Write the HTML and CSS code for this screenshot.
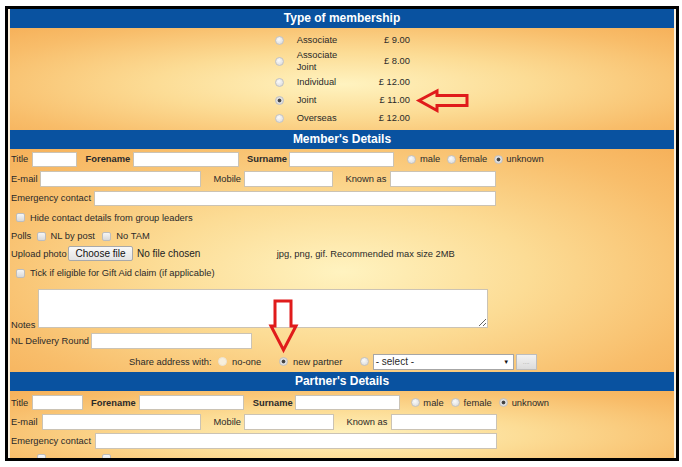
FILE: index.html
```html
<!DOCTYPE html>
<html lang="en">
<head>
    <meta charset="UTF-8">
    <meta name="viewport" content="width=device-width, initial-scale=1.0">
    <title>Membership form</title>
    <link rel="stylesheet" href="styles.css">
</head>
<body>

    <div class="frame">

      <!-- Type of membership -->
      <div class="section-head first">Type of membership</div>
      <div class="section-body plans-body">
        <table class="plans">
          <tr><td class="pick"><input type="radio" name="plan"></td><td class="plan-name">Associate</td><td class="plan-price">£ 9.00</td></tr>
          <tr class="tall"><td class="pick"><input type="radio" name="plan"></td><td class="plan-name">Associate Joint</td><td class="plan-price">£ 8.00</td></tr>
          <tr><td class="pick"><input type="radio" name="plan"></td><td class="plan-name">Individual</td><td class="plan-price">£ 12.00</td></tr>
          <tr><td class="pick"><input type="radio" name="plan" checked></td><td class="plan-name">Joint</td><td class="plan-price">£ 11.00</td></tr>
          <tr><td class="pick"><input type="radio" name="plan"></td><td class="plan-name">Overseas</td><td class="plan-price">£ 12.00</td></tr>
        </table>
      </div>

      <!-- Member's details -->
      <div class="section-head">Member's Details</div>
      <div class="section-body details member">
        <div class="row">
          <span class="l-title">Title</span><input class="i-title" type="text">
          <span class="l-fore">Forename</span><input class="i-fore" type="text">
          <span class="l-sur">Surname</span><input class="i-sur" type="text">
          <span class="gender">
            <input type="radio" name="g1"><span>male</span>
            <input type="radio" name="g1"><span>female</span>
            <input type="radio" name="g1" checked><span>unknown</span>
          </span>
        </div>
        <div class="row">
          <span class="l-email">E-mail</span><input class="i-email" type="text">
          <span class="l-mob">Mobile</span><input class="i-mob" type="text">
          <span class="l-known">Known as</span><input class="i-known" type="text">
        </div>
        <div class="row">
          <span class="l-emerg">Emergency contact</span><input class="i-emerg" type="text">
        </div>
        <div class="row">
          <input class="tick" type="checkbox"><span>Hide contact details from group leaders</span>
        </div>
        <div class="row polls">
          <span class="l-polls">Polls</span>
          <input type="checkbox"><span class="l-post">NL by post</span>
          <input type="checkbox"><span>No TAM</span>
        </div>
        <div class="row upload">
          <span class="l-upload">Upload photo</span>
          <span class="file">
            <button class="file-btn" type="button">Choose file</button>
            <span class="file-name">No file chosen</span>
          </span>
          <span>jpg, png, gif. Recommended max size 2MB</span>
        </div>
        <div class="row gift">
          <input class="tick" type="checkbox"><span>Tick if eligible for Gift Aid claim (if applicable)</span>
        </div>
        <div class="row notes">
          <span class="l-notes">Notes</span><textarea></textarea>
        </div>
        <div class="row nl">
          <span class="l-nl">NL Delivery Round</span><input class="i-nl" type="text">
        </div>
        <div class="row share">
          <span class="l-share">Share address with:</span>
          <input class="faint" type="radio" name="share"><span class="l-none">no-one</span>
          <input type="radio" name="share" checked><span class="l-new">new partner</span>
          <input type="radio" name="share">
          <div class="select"><span>- select -</span><span class="caret">&#9660;</span></div>
          <button class="more" type="button">....</button>
        </div>
      </div>

      <!-- Partner's details -->
      <div class="section-head">Partner's Details</div>
      <div class="section-body details partner">
        <div class="row">
          <span class="l-title">Title</span><input class="i-title" type="text">
          <span class="l-fore">Forename</span><input class="i-fore" type="text">
          <span class="l-sur">Surname</span><input class="i-sur" type="text">
          <span class="gender">
            <input type="radio" name="g2"><span>male</span>
            <input type="radio" name="g2"><span>female</span>
            <input type="radio" name="g2" checked><span>unknown</span>
          </span>
        </div>
        <div class="row">
          <span class="l-email">E-mail</span><input class="i-email" type="text">
          <span class="l-mob">Mobile</span><input class="i-mob" type="text">
          <span class="l-known">Known as</span><input class="i-known" type="text">
        </div>
        <div class="row">
          <span class="l-emerg">Emergency contact</span><input class="i-emerg" type="text">
        </div>
        <!-- next row is cut by the frame: only the tops of its boxes show -->
        <div class="row polls cut">
          <span class="l-polls"></span>
          <input type="checkbox"><span class="l-post"></span>
          <input type="checkbox">
        </div>
      </div>

    </div>

    <!-- annotation arrows -->
    <svg class="marks" width="682" height="467" viewBox="0 0 682 467">
      <polygon points="419,100.5 437,91 437,95.5 467,95.5 467,105.5 437,105.5 437,110.5" />
      <polygon points="275,301 291,301 291,326 296,326 283.5,350 271,326 275,326" />
    </svg>

</body>
</html>
```

FILE: styles.css
```css
html,
body {
  margin: 0;
  padding: 0;
  background: #fff;
}

body {
  position: relative;
  font-family: "Liberation Sans", Arial, sans-serif;
  font-size: 9.35px;
  color: #2a2a2a;
}

.frame {
  margin: 6px 0 0 5px;
  width: 664px;
  height: 449px;
  padding: 0 2px;
  border: 3px solid #000;
  background: #fbf0dc;
  overflow: hidden;
}

/* section bars */
.section-head {
  height: 18.5px;
  line-height: 18.5px;
  background: #0952a0;
  color: #fff;
  font-size: 12px;
  font-weight: bold;
  text-align: center;
}
.section-head.first {
  height: 19px;
  line-height: 19px;
}

.section-body {
  background: radial-gradient(ellipse farthest-corner at 50% 55%, #fff3c0 0%, #fcdc95 40%, #f8bd6a 80%, #f6b15a 100%);
}

/* membership table */
.plans-body {
  height: 102px;
  padding: 3px 4px 0 0;
  box-sizing: border-box;
}
.plans {
  margin: 0 auto;
  border-collapse: collapse;
}
.plans td {
  height: 18px;
  padding: 0;
  line-height: 12px;
}
.plans .pick {
  width: 21.5px;
  padding-left: 4.5px;
}
.plans .plan-name {
  width: 53.3px;
  padding-left: 0.7px;
}
.plans .plan-price {
  width: 60px;
  text-align: right;
}
.plans input {
  display: block;
}

/* controls */
input[type="text"],
textarea {
  box-sizing: border-box;
  height: 15.5px;
  margin: 0;
  padding: 0 2px;
  border: 1px solid #cbc3b4;
  background: #fff;
  font: inherit;
  flex: none;
}

input[type="radio"] {
  -webkit-appearance: none;
  appearance: none;
  flex: none;
  width: 9px;
  height: 9px;
  margin: 0;
  border: 1px solid #c2c2c2;
  border-radius: 50%;
  box-sizing: border-box;
  background: radial-gradient(circle at 40% 35%, #fbfbfb 0%, #d6d6d6 100%);
}
input[type="radio"]:checked {
  background: radial-gradient(circle, #3c3c3c 0, #4a4a4a 1.5px, #e4e4e4 2.3px, #d4d4d4 100%);
}
input.faint {
  border-color: #ece4d4;
  background: #f7efdc;
}

input[type="checkbox"] {
  -webkit-appearance: none;
  appearance: none;
  flex: none;
  width: 9px;
  height: 9px;
  margin: 0;
  border: 1px solid #bdbdbd;
  border-radius: 2px;
  box-sizing: border-box;
  background: linear-gradient(#f6f6f6, #d9d9d9);
}

/* detail rows */
.details {
  padding-left: 1px;
}
.member {
  height: 223.7px;
  padding-top: 1px;
  box-sizing: border-box;
}
.partner {
  height: 80px;
  padding-top: 2.3px;
  box-sizing: border-box;
}

.row {
  display: flex;
  align-items: center;
  height: 19.5px;
  white-space: nowrap;
}
.row > span {
  flex: none;
}
.partner .row {
  height: 19.3px;
}

.l-title { width: 20.7px; }
.i-title { width: 45.6px; }
.l-fore,
.l-sur {
  box-sizing: border-box;
  font-weight: bold;
  text-align: right;
  padding-right: 3px;
}
.l-fore { width: 56px; }
.i-fore { width: 106px; }
.l-sur { width: 50px; padding-right: 2.3px; }
.i-sur { width: 104.7px; }

.gender {
  display: flex;
  align-items: center;
  margin-left: 13.5px;
}
.gender input {
  margin: 0 3.5px 0 6.5px;
}
.gender input:first-child {
  margin-left: 0;
}

.l-email { width: 29px; }
.i-email { width: 160.7px; }
.l-mob,
.l-known {
  box-sizing: border-box;
  text-align: right;
  padding-right: 3px;
}
.l-mob { width: 43.3px; }
.i-mob { width: 89px; }
.l-known { width: 57px; padding-right: 3.5px; }
.i-known { width: 105.7px; }

.l-emerg { width: 83.3px; }
.i-emerg { width: 401.7px; }

/* partner column widths are a touch different */
.partner .i-title { width: 51.7px; }
.partner .l-fore { width: 55.3px; }
.partner .i-fore { width: 105.7px; }
.partner .l-sur { width: 50.7px; }
.partner .i-sur { width: 105.3px; }
.partner .gender { margin-left: 10.5px; }
.partner .gender input { margin-left: 7.5px; }
.partner .gender input:first-child { margin-left: 0; }
.partner .l-email { width: 30.7px; }
.partner .i-email { width: 159.3px; }
.partner .l-mob { width: 43px; }
.partner .i-mob { width: 90px; }
.partner .l-emerg { width: 84px; }
.partner .i-emerg { width: 402.3px; }

.tick {
  margin: 0 5.5px 0 4.5px !important;
}

.polls {
  height: 17px;
}
.l-polls { width: 26.3px; }
.l-post { width: 51.7px; margin-left: 4.3px; }
.polls .l-post + input { margin-right: 5px; }
.partner .cut {
  height: 16px;
}

.upload {
  height: 18px;
}
.l-upload { width: 57px; }
.file {
  display: flex;
  align-items: center;
  width: 208.7px;
}
.file-btn {
  box-sizing: border-box;
  width: 65px;
  height: 15px;
  margin: 0;
  padding: 0;
  border: 1px solid #a9a9a9;
  border-radius: 2px;
  background: linear-gradient(#f9f9f9, #e3e3e3);
  color: #111;
  font: inherit;
  font-size: 10px;
}
.file-name {
  margin-left: 4px;
  font-size: 10px;
  color: #222;
}

.gift {
  height: 21px;
}

.notes {
  height: 47px;
  align-items: flex-start;
}
.l-notes {
  width: 27px;
  align-self: flex-end;
  line-height: 11px;
}
.notes textarea {
  width: 449.7px;
  height: 39px;
  margin-top: 5px;
}

.nl {
  height: 21px;
}
.l-nl { width: 80px; }
.i-nl { width: 161px; height: 15px; }

.share {
  height: 20.7px;
}
.l-share {
  width: 88.5px;
  margin-left: 118px;
}
.l-none { width: 46.5px; margin-left: 5.5px; }
.l-new { width: 66.5px; margin-left: 5.5px; }

.select {
  box-sizing: border-box;
  display: flex;
  align-items: center;
  justify-content: space-between;
  width: 141.6px;
  height: 15.5px;
  margin-left: 4.2px;
  padding: 0 4px 0 2px;
  border: 1px solid #a6a6a6;
  background: #fff;
  font-size: 10px;
}
.caret {
  font-size: 6px;
  color: #111;
}
.more {
  box-sizing: border-box;
  width: 21px;
  height: 15.5px;
  margin: 0 0 0 1.4px;
  padding: 0;
  border: 1px solid #bdbdbd;
  background: linear-gradient(#f2f2f2, #dcdcdc);
  color: #999;
  font-size: 6px;
}

/* annotation overlay */
.marks {
  position: absolute;
  left: 0;
  top: 0;
  pointer-events: none;
}
.marks polygon {
  fill: none;
  stroke: #e01b1b;
  stroke-width: 3;
  stroke-linejoin: miter;
}
```
